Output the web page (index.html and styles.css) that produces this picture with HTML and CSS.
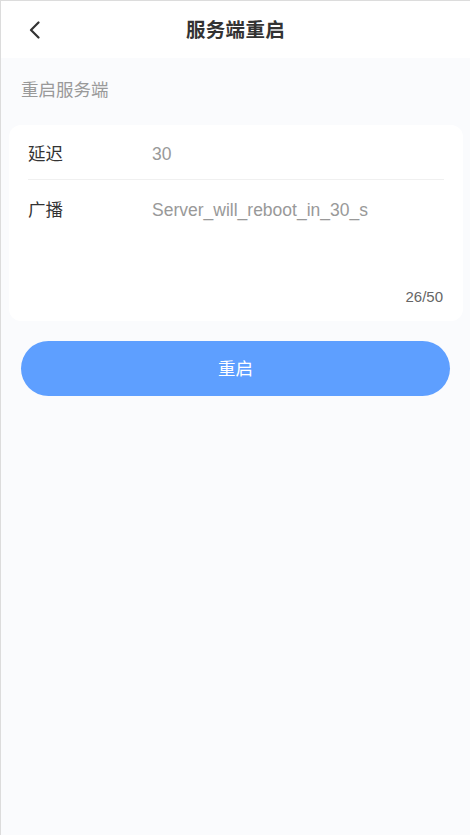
FILE: index.html
```html
<!DOCTYPE html>
<html lang="zh">
<head>
<meta charset="utf-8">
<title>服务端重启</title>
<link rel="stylesheet" href="styles.css">
</head>
<body>
<div class="page">
  <header class="nav">
    <button class="back" aria-label="返回">
      <svg width="14" height="18" viewBox="0 0 14 18"><path d="M10.5 1.5 L3 9 L10.5 16.5" fill="none" stroke="#333" stroke-width="2.2" stroke-linecap="round" stroke-linejoin="round"/></svg>
    </button>
    <h1 class="title">服务端重启</h1>
  </header>
  <main class="content">
    <div class="section-title">重启服务端</div>
    <div class="card">
      <div class="row">
        <div class="label">延迟</div>
        <div class="value">30</div>
      </div>
      <div class="row row-area">
        <div class="label">广播</div>
        <div class="area">
          <div class="value">Server_will_reboot_in_30_s</div>
          <div class="count">26/50</div>
        </div>
      </div>
    </div>
    <button class="btn">重启</button>
  </main>
</div>
</body>
</html>
```
FILE: styles.css
```css
* { box-sizing: border-box; }
html, body { margin: 0; padding: 0; }
body {
  font-family: "Liberation Sans", "Noto Sans CJK SC", sans-serif;
  background: #fafbfd;
}
.page {
  width: 470px;
  height: 835px;
  border-left: 1px solid #dcdcdc;
  border-top: 1px solid #dcdcdc;
  background: #fafbfd;
}
.nav {
  height: 57px;
  background: #fff;
  display: flex;
  align-items: center;
  justify-content: center;
  position: relative;
}
.back {
  position: absolute;
  left: 26px;
  top: 19px;
  border: 0;
  background: none;
  padding: 0;
  width: 16px;
  height: 20px;
  display: flex;
  align-items: center;
  justify-content: center;
}
.title {
  margin: 0 0 2px 0;
  font-size: 19.5px;
  font-weight: bold;
  color: #333;
  letter-spacing: 0.3px;
}
.content {
  padding: 0 7px 0 8px;
}
.section-title {
  height: 67px;
  padding: 20px 0 0 12px;
  font-size: 17.5px;
  color: #999;
  line-height: 24px;
}
.card {
  background: #fff;
  border-radius: 12px;
  padding: 0 19px 0 19px;
  height: 196px;
}
.row {
  display: flex;
  align-items: center;
  height: 55px;
  padding-top: 3px;
  border-bottom: 1px solid #f0f0f0;
}
.row-area {
  border-bottom: 0;
  align-items: flex-start;
  height: auto;
  padding-top: 18px;
}
.label {
  width: 124px;
  flex: none;
  font-size: 17.5px;
  color: #333;
  line-height: 24px;
}
.value {
  font-size: 17.5px;
  color: #999;
  line-height: 24px;
}
.area {
  flex: 1;
  display: flex;
  flex-direction: column;
  height: 109px;
}
.count {
  margin-top: auto;
  margin-right: 1px;
  text-align: right;
  font-size: 15px;
  color: #666;
  line-height: 20px;
}
.btn {
  display: block;
  margin: 20px 13px 0 12px;
  width: 429px;
  height: 55px;
  border: 0;
  border-radius: 28px;
  background: #5e9fff;
  color: #fff;
  font-family: "Liberation Sans", "Noto Sans CJK SC", sans-serif;
  font-size: 17.5px;
  padding: 0 0 3px 0;
}
```
